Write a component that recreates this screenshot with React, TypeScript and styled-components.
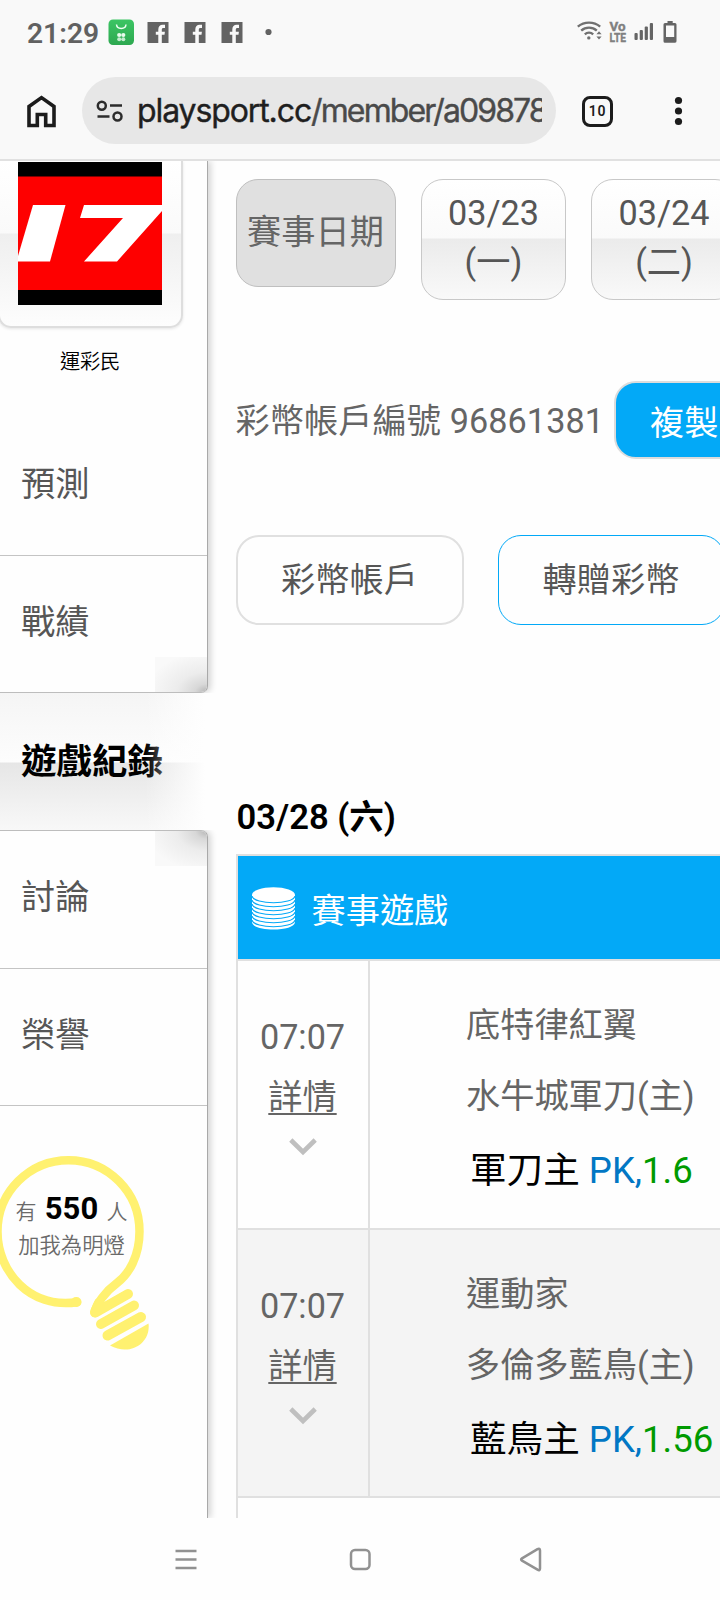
import React from "react";
import styled, { createGlobalStyle, css } from "styled-components";

const Global = createGlobalStyle`
  *, *::before, *::after { box-sizing: border-box; }
  body {
    margin: 0;
    background: #fefefe;
    font-family: Roboto, "Noto Sans CJK TC", sans-serif;
    color: #656565;
  }
`;

const Screen = styled.div`
  width: 720px;
  height: 1600px;
  display: flex;
  flex-direction: column;
  overflow: hidden;
  background: #fefefe;
`;

/* ---------- status bar ---------- */
const StatusBar = styled.div`
  height: 64px;
  flex: none;
  display: flex;
  align-items: center;
  padding: 0 43px 0 27px;
  background: #f9f9f9;
`;

const Clock = styled.span`
  font-size: 28.2px;
  line-height: 28px;
  font-weight: 600;
  color: #616161;
  width: 80.5px;
  margin-top: 3px;
  white-space: nowrap;
`;

const StatusIcons = styled.svg<{ $push?: boolean }>`
  display: block;
  flex: none;
  ${(p) => p.$push && css`margin-left: auto;`}
`;

/* ---------- browser toolbar ---------- */
const Toolbar = styled.div`
  height: 97px;
  flex: none;
  display: flex;
  align-items: center;
  padding: 0 35px 2px 27px;
  border-bottom: 2px solid #e1e1e1;
  background: #f9f9f9;
`;

const HomeIcon = styled.svg`
  display: block;
  margin-top: 2px;
`;

const AddressBar = styled.div`
  width: 474px;
  height: 67px;
  margin: 0 26px 0 26px;
  padding-left: 14px;
  display: flex;
  align-items: center;
  border-radius: 34px;
  background: #e7e7e7;
`;

const Url = styled.div`
  width: 405px;
  margin-left: 14px;
  overflow: hidden;
  white-space: nowrap;
  font-family: Inter, Roboto, sans-serif;
  font-size: 32px;
  line-height: 44px;
  letter-spacing: -1.9px;
  color: #4a4a4a;
  -webkit-text-stroke: 0.4px currentColor;
`;

const Domain = styled.span`
  letter-spacing: -1.1px;
  color: #1f1f1f;
`;

const TabCount = styled.div`
  width: 31px;
  height: 31px;
  margin-top: 1px;
  display: flex;
  align-items: center;
  justify-content: center;
  border: 3px solid #1c1c1c;
  border-radius: 8px;
  font: 600 14px/14px Roboto, sans-serif;
  letter-spacing: 0.8px;
  color: #1c1c1c;
`;

const MoreButton = styled.svg`
  margin-left: auto;
  display: block;
`;

/* ---------- page ---------- */
const Page = styled.div`
  height: 1357px;
  flex: none;
  display: flex;
  overflow: hidden;
`;

const Sidebar = styled.aside`
  width: 208px;
  flex: none;
  display: flex;
  flex-direction: column;
`;

const Panel = styled.div<{ $side: "top" | "bottom" }>`
  border-right: 1px solid #a9a9a9;
  box-shadow: 3px 0 6px rgba(0, 0, 0, 0.16);
  clip-path: inset(0 -12px 0 0);
  background: #fefefe;
  ${(p) =>
    p.$side === "top"
      ? css`
          height: 532px;
          border-bottom: 1px solid #bdbdbd;
          border-bottom-right-radius: 7px;
        `
      : css`
          flex: 1;
          border-top: 1px solid #bdbdbd;
          border-top-right-radius: 7px;
        `}
`;

const AvatarCard = styled.div`
  width: 185px;
  height: 167px;
  margin-left: -2px;
  padding: 1px 0 0 20px;
  border: 2px solid #dedede;
  border-top: 0;
  border-radius: 0 0 13px 13px;
  box-shadow: 0 1px 3px rgba(0, 0, 0, 0.1);
  background: linear-gradient(#ffffff 0, #fafafa 72px, #efefef 73px, #fdfdfd 100%);
  background-clip: padding-box;
`;

const Avatar = styled.svg`
  display: block;
  margin-left: -2px;
`;

const UserName = styled.div`
  width: 180px;
  height: 90px;
  padding-top: 19px;
  text-align: center;
  font-size: 20.3px;
  line-height: 30px;
  letter-spacing: -0.3px;
  font-weight: 350;
  color: #000;
`;

const NavItem = styled.a<{ $shade?: "up" | "down"; $last?: boolean }>`
  display: block;
  height: ${(p) => (p.$last ? 136.5 : 137.5)}px;
  padding: 42px 0 0 21px;
  font-size: 34.2px;
  line-height: 48px;
  color: #565656;
  border-bottom: ${(p) => (p.$last ? "0" : "1.5px solid #c4c4c4")};
  ${(p) =>
    p.$shade === "up" &&
    css`
      border-bottom-right-radius: 6px;
      background: radial-gradient(ellipse 60px 40px at 100% 100%, #b4b4b4 0, #d8d8d8 20%, #ececec 50%, #f9f9f9 100%)
        right bottom / 52px 35px no-repeat;
    `}
  ${(p) =>
    p.$shade === "down" &&
    css`
      border-top-right-radius: 6px;
      background: radial-gradient(ellipse 60px 40px at 100% 0%, #b4b4b4 0, #d8d8d8 20%, #ececec 50%, #f9f9f9 100%)
        right top / 52px 35px no-repeat;
    `}
`;

const ActiveItem = styled.a`
  position: relative;
  height: 137px;
  display: block;
  padding: 44px 0 0 21px;
  font-size: 35.5px;
  line-height: 50px;
  font-weight: 700;
  color: #000;
  white-space: nowrap;
  background: linear-gradient(#f5f5f5 0, #fdfdfd 69px, #e6e6e6 70px, #f8f8f8 100%);
  &::after {
    content: "";
    position: absolute;
    inset: 0 0 0 145px;
    background: linear-gradient(90deg, rgba(254, 254, 254, 0), #fefefe 95%);
  }
`;

const Beacon = styled.div`
  position: relative;
  width: 152px;
  height: 196px;
  margin-top: 49px;
`;

const Bulb = styled.svg`
  position: absolute;
  left: 0;
  top: 0;
`;

const BeaconText = styled.div`
  position: relative;
  padding-top: 37px;
  width: 143px;
  text-align: center;
  font-size: 21.3px;
  line-height: 34px;
  font-weight: 350;
  color: #6a6a6a;
  white-space: nowrap;
`;

const Count = styled.b`
  margin: 0 3px;
  font-size: 31px;
  font-weight: 700;
  color: #000;
`;

const Small = styled.span`
  font-size: 21px;
`;

/* ---------- main column ---------- */
const Main = styled.main`
  width: 512px;
  flex: none;
  padding: 18px 0 0 27.5px;
  font-size: 34.2px;
  overflow: hidden;
`;

const Dates = styled.div`
  width: 600px;
  display: flex;
  align-items: flex-start;
  gap: 25.3px;
`;

const DateLabel = styled.div`
  width: 160px;
  height: 108px;
  padding-top: 3px;
  text-align: center;
  line-height: 98px;
  border: 1px solid #bfbfbf;
  border-radius: 22px;
  background: #e0e0e0;
`;

const DateChip = styled.div`
  width: 145.3px;
  height: 121px;
  padding-top: 9px;
  text-align: center;
  line-height: 49px;
  color: #565656;
  border: 1px solid #c8c8c8;
  border-radius: 22px;
  background: linear-gradient(#fff 0, #fafafa 58px, #ebebeb 59px, #f9f9f9 100%);
`;

const AccountRow = styled.div`
  width: 600px;
  height: 78px;
  margin-top: 81px;
  display: flex;
  align-items: center;
`;

const AccountText = styled.span`
  width: 378.5px;
  padding-top: 2px;
  line-height: 50px;
  letter-spacing: 0.08px;
  white-space: nowrap;
`;

const CopyButton = styled.button`
  width: 150px;
  height: 78px;
  padding: 0 0 0 34px;
  text-align: left;
  font: inherit;
  color: #fff;
  border: 2px solid #dcdcdc;
  border-radius: 22px;
  background: #03a9f7;
`;

const Actions = styled.div`
  width: 600px;
  margin-top: 76px;
  display: flex;
  gap: 34px;
`;

const ActionButton = styled.button<{ $accent?: boolean }>`
  width: ${(p) => (p.$accent ? 227 : 228)}px;
  height: 90px;
  padding: 0 0 7px;
  font: inherit;
  color: #565656;
  background: #fefefe;
  border: ${(p) => (p.$accent ? "1.5px solid #03a9f7" : "2px solid #e0e0e0")};
  border-radius: 23px;
`;

const DayTitle = styled.h2`
  margin: 167px 0 0 1px;
  height: 62px;
  font-size: 34.6px;
  line-height: 50px;
  font-weight: 600;
  color: #000;
`;

const Table = styled.section`
  width: 600px;
  border: 2px solid #e0e0e0;
  border-bottom: 0;
`;

const TableHead = styled.header`
  height: 105px;
  padding: 1px 0 0 14px;
  display: flex;
  align-items: center;
  gap: 17px;
  color: #fff;
  background: #03a9f7;
  border-bottom: 2px solid #e0e0e0;
`;

const GameRow = styled.div<{ $alt?: boolean }>`
  height: 268px;
  display: flex;
  background: ${(p) => (p.$alt ? "#f4f4f4" : "#fefefe")};
  border-bottom: 2px solid #e0e0e0;
  &:first-of-type { height: 269px; }
`;

const TimeCell = styled.div`
  width: 132px;
  padding-top: 45.5px;
  display: flex;
  flex-direction: column;
  align-items: center;
  line-height: 60.5px;
  border-right: 2px solid #e0e0e0;
`;

const Detail = styled.a`
  text-decoration: underline;
  text-decoration-thickness: 2px;
  text-underline-offset: 4px;
`;

const Chevron = styled.svg`
  display: block;
  margin-top: 10px;
`;

const PickCell = styled.div`
  padding: 28.5px 0 0 96.5px;
  line-height: 71.5px;
  white-space: nowrap;
`;

const Pick = styled.div`
  padding-left: 4px;
  font-size: 36.6px;
  line-height: 75px;
  color: #000;
`;

const Handicap = styled.span`
  color: #0277c4;
`;

const Odds = styled.span`
  color: #009a00;
`;

/* ---------- system navigation ---------- */
const SystemNav = styled.nav`
  flex: 1;
  display: flex;
  justify-content: center;
  padding-top: 29px;
`;

const games = [
  { time: "07:07", away: "底特律紅翼", home: "水牛城軍刀(主)", pick: "軍刀主", odds: "1.6" },
  { time: "07:07", away: "運動家", home: "多倫多藍鳥(主)", pick: "藍鳥主", odds: "1.56" },
];

const Facebook = ({ x }: { x: number }) => (
  <g transform={`translate(${x} 3)`}>
    <rect width="21" height="21" fill="#636363" />
    <path d="M10.8 21V12.800H8.300V9.700h2.500V7.500c0-3 1.700-4.700 4.400-4.700h2.300v3.200h-1.500c-1.200 0-1.700.7-1.700 1.700v2h3.100l-.4 3.100h-2.700V21z" fill="#f9f9f9" />
  </g>
);

const Notifications = () => (
  <StatusIcons width="170" height="27" viewBox="0 0 170 27">
    <defs>
      <linearGradient id="green" x1="0" y1="0" x2="0" y2="1">
        <stop offset="0" stopColor="#3cc564" />
        <stop offset="1" stopColor="#2da850" />
      </linearGradient>
    </defs>
    <rect x="0.5" y="0.5" width="25.5" height="25.5" rx="4.5" fill="url(#green)" />
    <path d="M8.500 5.500c.5 5.200 9 5.200 9.500 0" fill="none" stroke="#f0fff4" strokeWidth="1.500" />
    <g fill="#e8fbec">
      <circle cx="11.200" cy="16" r="2.100" /><circle cx="15.300" cy="16" r="2.100" />
      <circle cx="11.200" cy="20.200" r="2" opacity=".8" /><circle cx="15.300" cy="20.200" r="2" opacity=".8" />
    </g>
    <Facebook x={39.5} />
    <Facebook x={76.5} />
    <Facebook x={113.5} />
    <circle cx="160.500" cy="13" r="3.100" fill="#636363" />
  </StatusIcons>
);

const Connectivity = () => (
  <StatusIcons $push width="100" height="26" viewBox="0 0 100 26">
    <g fill="none" stroke="#707070" strokeWidth="2.400">
      <path d="M.8 7.700c6.500-5.400 15.900-5.400 22.400 0" />
      <path d="M4.200 11.600c4.500-4 11.100-4 15.600 0" />
      <path d="M7.800 15.300c2.400-2.100 6-2.100 8.400 0" />
    </g>
    <circle cx="11.800" cy="18.900" r="1.700" fill="#707070" />
    <path d="M19.400 15.200l2.600-3 2.600 3zM19.400 17.500l2.600 3 2.600-3z" fill="#707070" />
    <g fill="#808080" stroke="#808080" strokeWidth="0.400" fontFamily="Roboto, sans-serif" fontWeight="700" fontSize="13">
      <text x="32.500" y="12.200" textLength="16" lengthAdjust="spacingAndGlyphs">Vo</text>
      <text x="32.500" y="23.400" textLength="16.500" lengthAdjust="spacingAndGlyphs">LTE</text>
    </g>
    <g fill="#656565">
      <rect x="57.500" y="14" width="3.200" height="7" rx="1" />
      <rect x="62.700" y="11" width="3.200" height="10" rx="1" />
      <rect x="67.700" y="7.500" width="3.200" height="13.500" rx="1" />
      <rect x="72.800" y="4" width="3.200" height="17" rx="1" />
      <path fillRule="evenodd" d="M90.500 2h5.200v2H98a1.500 1.500 0 0 1 1.500 1.500v16.500A1.500 1.500 0 0 1 98 23.700H88a1.500 1.500 0 0 1-1.500-1.500V5.500A1.500 1.500 0 0 1 88 4h2.500zM89 6.500V18h8.200V6.500z" />
    </g>
  </StatusIcons>
);

const Coins = () => (
  <svg width="43" height="43" viewBox="0 0 43 43">
    <path d="M0 8v27c0 10 43 10 43 0V8z" fill="#fff" />
    <ellipse cx="21.500" cy="8" rx="21.500" ry="7.800" fill="#fff" />
    {[0, 1, 2, 3, 4, 5, 6].map((i) => (
      <path key={i} d={`M0 ${9 + i * 4}c2 9 41 9 43 0`} fill="none" stroke="#03a9f7" strokeWidth="1.100" />
    ))}
  </svg>
);

export default function App() {
  return (
    <Screen>
      <Global />
      <StatusBar>
        <Clock>21:29</Clock>
        <Notifications />
        <Connectivity />
      </StatusBar>

      <Toolbar>
        <HomeIcon width="29" height="33" viewBox="0 0 29 33">
          <path d="M2 11.500L14.500 2.600 27 11.500V30.500H18.700V19.500H10.300V30.500H2z" fill="none" stroke="#1c1c1c" strokeWidth="3.600" />
        </HomeIcon>
        <AddressBar>
          <svg width="27" height="24" viewBox="0 0 27 24">
            <g fill="none" stroke="#2c2c2c" strokeWidth="2.500">
              <circle cx="5.800" cy="6.800" r="4" />
              <circle cx="21.500" cy="17.500" r="4" />
              <path d="M14 6.500h12M1.500 17.500h12" />
            </g>
          </svg>
          <Url>
            <Domain>playsport.cc</Domain>/member/a09878
          </Url>
        </AddressBar>
        <TabCount>10</TabCount>
        <MoreButton width="13" height="32" viewBox="0 0 13 32">
          <g fill="#1c1c1c">
            <circle cx="6.500" cy="5.500" r="3.600" />
            <circle cx="6.500" cy="16" r="3.600" />
            <circle cx="6.500" cy="26.500" r="3.600" />
          </g>
        </MoreButton>
      </Toolbar>

      <Page>
        <Sidebar>
          <Panel $side="top">
            <AvatarCard>
              <Avatar width="144" height="143" viewBox="0 0 144 143">
                <rect width="144" height="143" fill="#000" />
                <rect y="14.500" width="144" height="113.500" fill="#fe0000" />
                <path d="M15 43H47.500L32 99.500H0V94z" fill="#fff" />
                <path d="M66 43H144V49L99 99.500H66L105 56H62z" fill="#fff" />
              </Avatar>
            </AvatarCard>
            <UserName>運彩民</UserName>
            <NavItem>預測</NavItem>
            <NavItem $shade="up" $last>戰績</NavItem>
          </Panel>
          <ActiveItem>遊戲紀錄</ActiveItem>
          <Panel $side="bottom">
            <NavItem $shade="down">討論</NavItem>
            <NavItem>榮譽</NavItem>
            <Beacon>
              <Bulb width="152" height="196" viewBox="0 0 152 196">
                <g fill="none" stroke="#fff170" strokeLinecap="round" strokeLinejoin="round">
                  <path strokeWidth="8.500" d="M77 147.200C30 154-2.500 117-2.500 76.500A71 71.300 0 0 1 139.500 76.500C139.500 101 129 119 117 128C106 136 96 149 94.500 158L127 139.500" />
                  <path strokeWidth="10" d="M76 147h.500M95 157l4-9M95.500 157.500L128 139M101 169l33-18.500M107.500 180.500L141 162" />
                </g>
                <path d="M110 190.500L148.500 168.500C151 187 131 202 110 190.500z" fill="#fff170" />
              </Bulb>
              <BeaconText>
                <Small>有</Small> <Count>550</Count> <Small>人</Small>
                <br />
                加我為明燈
              </BeaconText>
            </Beacon>
          </Panel>
        </Sidebar>

        <Main>
          <Dates>
            <DateLabel>賽事日期</DateLabel>
            <DateChip>03/23<br />(一)</DateChip>
            <DateChip>03/24<br />(二)</DateChip>
          </Dates>
          <AccountRow>
            <AccountText>彩幣帳戶編號 96861381</AccountText>
            <CopyButton>複製</CopyButton>
          </AccountRow>
          <Actions>
            <ActionButton>彩幣帳戶</ActionButton>
            <ActionButton $accent>轉贈彩幣</ActionButton>
          </Actions>
          <DayTitle>03/28 (六)</DayTitle>
          <Table>
            <TableHead>
              <Coins />
              賽事遊戲
            </TableHead>
            {games.map((g, i) => (
              <GameRow key={i} $alt={i % 2 === 1}>
                <TimeCell>
                  <span>{g.time}</span>
                  <Detail>詳情</Detail>
                  <Chevron width="28" height="18" viewBox="0 0 28 18">
                    <path d="M1.800 2L14 14L26.200 2" fill="none" stroke="#bfbfbf" strokeWidth="4.600" />
                  </Chevron>
                </TimeCell>
                <PickCell>
                  <div>{g.away}</div>
                  <div>{g.home}</div>
                  <Pick>
                    {g.pick} <Handicap>PK,</Handicap>
                    <Odds>{g.odds}</Odds>
                  </Pick>
                </PickCell>
              </GameRow>
            ))}
            <GameRow />
          </Table>
        </Main>
      </Page>

      <SystemNav>
        <svg width="370" height="26" viewBox="0 0 370 26">
          <g fill="none" stroke="#919191" strokeWidth="2.500" strokeLinejoin="round">
            <path d="M.5 4h21M.5 12.500h21M.5 21h21" />
            <rect x="176" y="3" width="18.500" height="19" rx="4" />
            <path d="M347 11.300L362.500 2.200Q365 1 365 3.500V21.500Q365 24 362.500 22.700L347 13.700Q345.300 12.500 347 11.300z" />
          </g>
        </svg>
      </SystemNav>
    </Screen>
  );
}
